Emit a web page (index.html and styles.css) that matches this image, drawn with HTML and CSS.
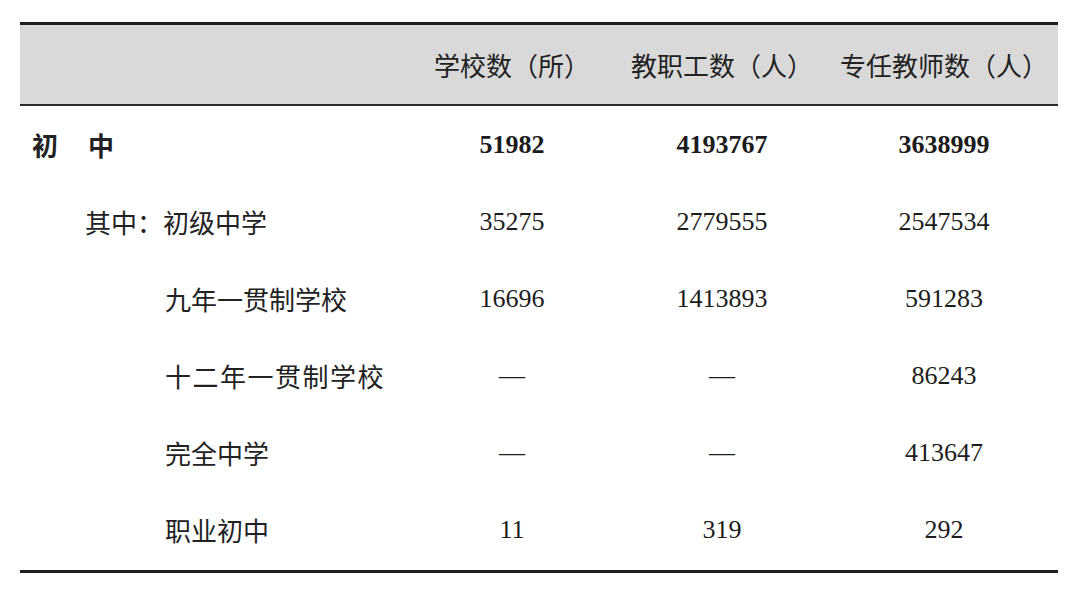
FILE: index.html
```html
<!DOCTYPE html>
<html lang="zh-CN">
<head>
<meta charset="utf-8">
<title>初中学校与教职工统计</title>
<link rel="stylesheet" href="styles.css">
</head>
<body>
<div class="table">
  <div class="row head">
    <div class="cell label"></div>
    <div class="cell num">学校数（所）</div>
    <div class="cell num">教职工数（人）</div>
    <div class="cell num">专任教师数（人）</div>
  </div>
  <div class="body">
    <div class="row total">
      <div class="cell label lvl0"><span>初</span><span>中</span></div>
      <div class="cell num">51982</div>
      <div class="cell num">4193767</div>
      <div class="cell num">3638999</div>
    </div>
    <div class="row">
      <div class="cell label lvl1">其中：初级中学</div>
      <div class="cell num">35275</div>
      <div class="cell num">2779555</div>
      <div class="cell num">2547534</div>
    </div>
    <div class="row">
      <div class="cell label lvl2">九年一贯制学校</div>
      <div class="cell num">16696</div>
      <div class="cell num">1413893</div>
      <div class="cell num">591283</div>
    </div>
    <div class="row">
      <div class="cell label lvl2 wide">十二年一贯制学校</div>
      <div class="cell num">—</div>
      <div class="cell num">—</div>
      <div class="cell num">86243</div>
    </div>
    <div class="row">
      <div class="cell label lvl2">完全中学</div>
      <div class="cell num">—</div>
      <div class="cell num">—</div>
      <div class="cell num">413647</div>
    </div>
    <div class="row">
      <div class="cell label lvl2">职业初中</div>
      <div class="cell num">11</div>
      <div class="cell num">319</div>
      <div class="cell num">292</div>
    </div>
  </div>
</div>
</body>
</html>
```
FILE: styles.css
```css
html, body {
  margin: 0;
  padding: 0;
  background: #ffffff;
}

body {
  padding-top: 22px;
  color: #1c1c1c;
  font-family: "Noto Sans CJK SC", "Noto Sans", sans-serif;
  font-size: 26px;
}

.table {
  margin-left: 20px;
  width: 1038px;
  border-top: 3px solid #1e1e1e;
  border-bottom: 3px solid #1e1e1e;
}

.row {
  display: grid;
  grid-template-columns: 390px 204px 216px 228px;
  height: 77px;
  align-items: center;
}

.head {
  height: 79px;
  background: #d9d9d9;
  border-bottom: 2px solid #2a2a2a;
}

.head .num {
  font-family: "Noto Sans CJK SC", sans-serif;
  color: #222;
}

.body {
  padding-bottom: 2px;
}

.cell {
  white-space: nowrap;
}

.num {
  text-align: center;
  font-family: "Liberation Serif", "Noto Sans CJK SC", serif;
  font-size: 26px;
}

.total .num {
  font-weight: bold;
}

.label {
  font-family: "Noto Sans CJK SC", sans-serif;
  color: #222;
}

.lvl0 {
  display: flex;
  gap: 30px;
  padding-left: 12px;
  font-weight: bold;
}

.lvl1 {
  padding-left: 65px;
}

.lvl2 {
  padding-left: 145px;
}

.wide {
  letter-spacing: 1.5px;
}
```
